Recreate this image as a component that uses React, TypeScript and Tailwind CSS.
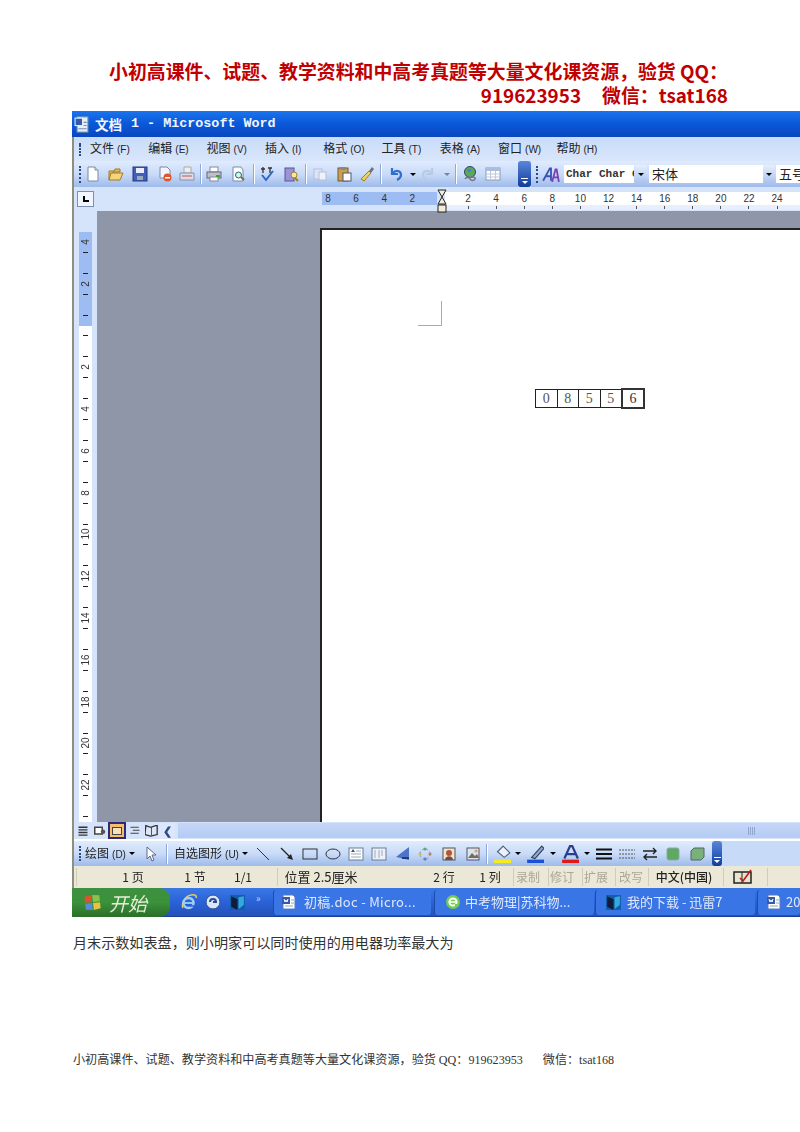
import React from "react";

const CJK = "font-['Noto_Sans_CJK_SC',sans-serif]";
const SERIF = "font-['Liberation_Serif','Noto_Sans_CJK_SC',serif]";
type IP = { children: React.ReactNode; s?: number };
const Ic = ({ children, s = 16 }: IP) => (
  <svg width={s} height={s} viewBox="0 0 16 16" className="block shrink-0">{children}</svg>
);

/* places each item so that its centre falls on the given x of the page */
type Slot = [number, number, React.ReactNode];
function Slots({ start, items }: { start: number; items: Slot[] }) {
  let prev = start;
  return (
    <>
      {items.map(([c, w, n], i) => {
        const m = c - w / 2 - prev;
        prev = c + w / 2;
        return (
          <div key={i} className="shrink-0 flex items-center justify-center whitespace-nowrap" style={{ marginLeft: m, width: w }}>{n}</div>
        );
      })}
    </>
  );
}

const NewDoc = () => <Ic><path d="M3 1h7l3 3v11H3z" fill="#fff" stroke="#7a8aa8" /><path d="M10 1v3h3" fill="#dfe6f4" stroke="#7a8aa8" /></Ic>;
const Open = () => <Ic><path d="M1 5h5l1-2h5v3H5l-4 8z" fill="#e8b94a" stroke="#a37b20" /><path d="M3 7h12l-3 7H1z" fill="#f5d47a" stroke="#a37b20" /></Ic>;
const Save = () => <Ic><rect x="1" y="1" width="14" height="14" fill="#3f5fb8" stroke="#26397c" /><rect x="4" y="2" width="8" height="5" fill="#e8eefc" /><rect x="5" y="10" width="6" height="4" fill="#9ab" /></Ic>;
const Perm = () => <Ic><path d="M3 1h7l3 3v8H3z" fill="#f4f4ff" stroke="#7a8aa8" /><circle cx="10.500" cy="11.500" r="4" fill="#e2552c" /><rect x="8" y="11" width="5" height="1.500" fill="#fff" /></Ic>;
const Mail = () => <Ic><path d="M5 1h7v6H5z" fill="#eee" stroke="#aaa" /><path d="M1 7h14v7H1z" fill="#d9dde8" stroke="#8a8fa8" /><path d="M3 10h10" stroke="#c55" /></Ic>;
const Print = () => <Ic><rect x="4" y="1" width="8" height="5" fill="#fff" stroke="#889" /><rect x="1" y="6" width="14" height="6" fill="#b9c2cc" stroke="#667" /><rect x="4" y="11" width="8" height="4" fill="#fff" stroke="#889" /><rect x="10" y="9" width="4" height="2" fill="#3a3" /></Ic>;
const Preview = () => <Ic><path d="M3 1h8l2 3v11H3z" fill="#fff" stroke="#7a8aa8" /><circle cx="8.500" cy="9" r="3" fill="#bfe" stroke="#457" /><path d="M11 11l3 3" stroke="#863" strokeWidth="2" /></Ic>;
const Spell = () => <Ic><path d="M2 3h4M4 1v6M9 2h4M11 2v5" stroke="#333" strokeWidth="1.300" /><path d="M3 9l4 5 7-9" fill="none" stroke="#2b68c4" strokeWidth="2" /></Ic>;
const Research = () => <Ic><rect x="2" y="2" width="9" height="13" fill="#9c93d6" stroke="#5a5296" /><circle cx="11" cy="9" r="3" fill="#f4e7a0" stroke="#a08020" /><path d="M12 12l3 3" stroke="#a08020" strokeWidth="2" /></Ic>;
const Cut = () => <Ic><rect x="2" y="3" width="8" height="10" fill="#dbe4f4" stroke="#b4c0d8" /><rect x="7" y="6" width="7" height="8" fill="#eef2fa" stroke="#b4c0d8" /></Ic>;
const Paste = () => <Ic><rect x="2" y="2" width="10" height="13" fill="#c8a050" stroke="#7a5c20" /><rect x="4" y="1" width="6" height="3" fill="#888" /><rect x="7" y="7" width="8" height="8" fill="#fff" stroke="#557" /></Ic>;
const Brush = () => <Ic><path d="M10 5L2 13l3 2 7-8z" fill="#f1d15a" stroke="#9a8030" /><path d="M10 5l3-4 2 2-3 4z" fill="#6b7280" /></Ic>;
const Undo = () => <Ic><path d="M4 2v6h6M5 7c2-3 8-3 8 2 0 2-2 4-4 5" fill="none" stroke="#2f6fd0" strokeWidth="2.200" /></Ic>;
const Redo = () => <Ic><path d="M12 2v6H6M11 7C9 4 3 4 3 9c0 2 2 4 4 5" fill="none" stroke="#b7cbe6" strokeWidth="2.200" /></Ic>;
const Globe = () => <Ic><circle cx="8" cy="6" r="5.500" fill="#5aa95a" stroke="#346" /><path d="M5 3h4v3H6z" fill="#4a7fd0" /><path d="M3 13c1-2 4-2 5 0s4 2 5 0-4-3-5-1" fill="none" stroke="#778" strokeWidth="1.600" /></Ic>;
const Table = () => <Ic><rect x="1" y="2" width="14" height="12" fill="#fff" stroke="#8a9ab8" /><rect x="1" y="2" width="14" height="3" fill="#a9bedf" /><path d="M1 8h14M1 11h14M5.500 5v9M10.500 5v9" stroke="#c0c8d8" /></Ic>;
const StyleIc = () => <Ic s={18}><path d="M1 14L7 3h1v11M4 10h4" fill="none" stroke="#3a4fb0" strokeWidth="1.600" /><path d="M9 15L12 4h1l2 11M10 11h4" fill="none" stroke="#7a3fb0" strokeWidth="1.600" /></Ic>;
const Caret = () => <span className="block w-0 h-0 border-x-[3px] border-x-transparent border-t-[3px] border-t-black" />;
const Chevron = ({ w, h }: { w: string; h: string }) => (
  <div className={`${w} ${h} shrink-0 bg-gradient-to-b from-[#5a86dc] to-[#0f3c9c] rounded-[3px] flex flex-col items-center justify-end gap-[2px] pb-[3px]`}>
    <span className="block w-[7px] h-[1px] bg-white" />
    <span className="block w-0 h-0 border-x-[3px] border-x-transparent border-t-[3px] border-t-white" />
  </div>
);
const Sep = () => <span className="block w-[2px] h-[20px] bg-[#8fa9d6] border-r border-white shrink-0" />;
const Grip = ({ h = "h-[17px]" }: { h?: string }) => (
  <div className={`flex flex-col justify-between ${h} w-[2px] shrink-0`}>
    {[0, 1, 2, 3, 4].map((i) => <span key={i} className="block w-[2px] h-[2px] bg-[#30487e]" />)}
  </div>
);
const Sm = ({ children }: { children: React.ReactNode }) => (
  <span className="text-[10px] font-['Liberation_Sans',sans-serif] ml-[3px]">{children}</span>
);

const toolbarBg = "bg-gradient-to-b from-[#e0ebfd] via-[#c9dbf8] to-[#9ebbea]";

const menus = [["文件", "(F)"], ["编辑", "(E)"], ["视图", "(V)"], ["插入", "(I)"], ["格式", "(O)"], ["工具", "(T)"], ["表格", "(A)"], ["窗口", "(W)"], ["帮助", "(H)"]];

function MenuBar() {
  return (
    <div className={`h-[24px] pl-[5px] flex items-center bg-gradient-to-b from-[#c9dcf9] to-[#d9e6fb] ${CJK}`}>
      <Grip h="h-[13px]" />
      <div className="flex pl-[9px]">
        {menus.map(([a, b]) => (
          <div key={a} className="w-[58.3px] shrink-0 text-[12px] leading-[16px] text-[#222] whitespace-nowrap">
            {a}<Sm>{b}</Sm>
          </div>
        ))}
      </div>
    </div>
  );
}

function MainToolbar() {
  const items: Slot[] = [
    [93, 16, <NewDoc />], [116, 16, <Open />], [140, 16, <Save />], [165, 16, <Perm />], [187, 16, <Mail />], [201, 2, <Sep />],
    [214, 16, <Print />], [238, 16, <Preview />], [254, 2, <Sep />], [267, 16, <Spell />], [291, 16, <Research />], [306, 2, <Sep />],
    [320, 16, <Cut />], [344, 16, <Paste />], [367, 16, <Brush />], [381, 2, <Sep />], [396, 16, <Undo />], [413, 6, <Caret />],
    [428, 16, <Redo />], [447, 6, <span className="opacity-40"><Caret /></span>], [456, 2, <Sep />], [470, 16, <Globe />], [493, 16, <Table />],
  ];
  return (
    <div className="h-[26px] flex items-center bg-[#c7daf8]">
      <div className={`h-[26px] w-[457px] shrink-0 pl-[5px] flex items-center rounded-r-[3px] ${toolbarBg}`}>
        <Grip />
        <Slots start={81} items={items} />
      </div>
      <div className="ml-[-13px]"><Chevron w="w-[13px]" h="h-[26px]" /></div>
      <div className={`h-[26px] flex-1 pl-[5px] flex items-center ${toolbarBg}`}>
        <Grip />
        <div className="ml-[4px]"><StyleIc /></div>
        <div className="ml-[4px] h-[18px] w-[70px] shrink-0 bg-white flex items-center pl-[2px] font-['Liberation_Mono',monospace] text-[11px] font-bold text-[#333] overflow-hidden whitespace-nowrap">Char Char C</div>
        <div className="ml-[1px]"><DropBtn /></div>
        <div className={`ml-[2px] h-[18px] w-[114px] shrink-0 bg-white flex items-center pl-[3px] text-[13px] text-[#222] ${CJK}`}>宋体</div>
        <DropBtn />
        <div className={`ml-[1px] h-[18px] w-[60px] shrink-0 bg-white flex items-center pl-[3px] text-[13px] text-[#222] whitespace-nowrap ${CJK}`}>五号</div>
      </div>
    </div>
  );
}
const DropBtn = () => <div className="h-[18px] w-[12px] shrink-0 bg-gradient-to-b from-[#e6effd] to-[#a9c3ee] flex items-center justify-center"><Caret /></div>;

function HRuler() {
  const left = ["8", "6", "4", "2"];
  const right = ["2", "4", "6", "8", "10", "12", "14", "16", "18", "20", "22", "24"];
  return (
    <div className="h-[24px] flex bg-[#d6e4fb] pl-[3px]">
      <div className="mt-[4px] h-[16px] w-[17px] shrink-0 bg-[#f1f5fd] border border-[#7d8fb0] flex items-center justify-center">
        <span className="block w-[6px] h-[6px] border-l-2 border-b-2 border-black" />
      </div>
      <div className="ml-[228px] mt-[5px] h-[13px] w-[115px] shrink-0 bg-[#9dbcf2] overflow-hidden">
        <div className="-ml-[8px] flex font-['Liberation_Sans',sans-serif] text-[10px] text-[#333] leading-[13px] whitespace-nowrap">
          {left.map((t) => <span key={t} className="block w-[28.1px] text-center shrink-0">{t}</span>)}
        </div>
      </div>
      <svg width="10" height="24" viewBox="0 -2 10 24" className="block shrink-0 mr-[-2px] overflow-visible relative z-10">
        <path d="M1 1h8L5 8l4 7H1l4-7z" fill="#f2ecd8" stroke="#222" /><rect x="1" y="16" width="8" height="7" fill="#f2ecd8" stroke="#222" />
      </svg>
      <div className="mt-[5px] h-[13px] flex-1 bg-white relative">
        <div className="flex pl-[9px] font-['Liberation_Sans',sans-serif] text-[10px] text-[#333] leading-[13px] whitespace-nowrap">
          {right.map((t) => <span key={t} className="block w-[28.1px] text-center shrink-0">{t}</span>)}
        </div>
        <div className="absolute left-0 right-0 top-full h-[5px] bg-[#e8effc] flex pl-[9px]">
          {right.map((t) => <span key={t} className="w-[28.1px] shrink-0 flex justify-center"><span className="block w-[1px] h-[3px] mt-[1px] bg-[#555]" /></span>)}
        </div>
      </div>
    </div>
  );
}

function VRuler() {
  const labels = ["4", "2", "", "2", "4", "6", "8", "10", "12", "14", "16", "18", "20", "22", ""];
  return (
    <div className="w-[23px] shrink-0 bg-[#d6e4fb] pl-[5px] pt-[21px] self-stretch">
      <div className="w-[13px] h-[590px] overflow-hidden bg-[linear-gradient(#9dbcf2_94px,#fff_94px)]">
        <div className="-mt-[11px] flex flex-col items-center">
          {labels.map((t, i) => (
            <div key={i} className="h-[41.8px] w-full shrink-0 flex flex-col items-center justify-between py-[10px]">
              <span className="block w-[5px] h-[1px] bg-[#222]" />
              <span className="block h-0 text-[10px] leading-[0] -rotate-90 font-['Liberation_Sans',sans-serif] text-[#333]">{t}</span>
              <span className="block w-[5px] h-[1px] bg-[#222]" />
            </div>
          ))}
        </div>
      </div>
    </div>
  );
}

function DocArea() {
  return (
    <div className="h-[611px] flex overflow-hidden">
      <VRuler />
      <div className="flex-1 bg-[#8e96a8] pt-[17px] pl-[223px] overflow-hidden">
        <div className="h-[700px] w-[600px] bg-white border-t-2 border-l-2 border-[#222] pl-[96px] pt-[71px]">
          <div className="w-[24px] h-[25px] border-r border-b border-[#aaa]" />
          <div className="ml-[117px] mt-[63px] flex w-fit font-['Liberation_Serif',serif] text-[14px] leading-[18px] text-[#555]">
            {["0", "8", "5", "5"].map((d, i) => (
              <span key={i} className="block w-[21.500px] h-[19px] text-center border border-r-0 border-[#222]">{d}</span>
            ))}
            <span className="block w-[24px] h-[21px] text-center border-2 border-[#333] -mt-[1px] text-[#333]">6</span>
          </div>
        </div>
      </div>
    </div>
  );
}

function ViewBar() {
  return (
    <div className="h-[17px] pl-[1px] flex items-center bg-[#d6e4fb]">
      <div className="flex items-center">
        <div className="w-[16px] flex justify-center"><Ic s={12}><path d="M2 3h12M2 6.500h12M2 10h12M2 13.500h12" stroke="#333" strokeWidth="1.800" /></Ic></div>
        <div className="w-[17px] flex justify-center"><Ic s={12}><rect x="1" y="3" width="10" height="9" fill="#fff" stroke="#444" strokeWidth="2" /><circle cx="12" cy="9" r="3" fill="#555" /></Ic></div>
        <div className="w-[18px] h-[17px] border-2 border-[#2a2a7e] bg-[#f6bd6e] flex items-center justify-center"><span className="block w-[10px] h-[8px] border border-[#444] bg-[#fbe2b6]" /></div>
        <div className="w-[17px] flex justify-center"><Ic s={12}><path d="M2 3h11M5 7h9M2 11h11" stroke="#444" strokeWidth="1.600" /></Ic></div>
        <div className="w-[16px] flex justify-center"><Ic s={13}><path d="M1 2l6 2 6-2 2 0v11l-8 2-7-2z" fill="#dde6f6" stroke="#333" strokeWidth="1.600" /><path d="M8 4v10" stroke="#333" /></Ic></div>
      </div>
      <div className="h-[16px] w-[16px] bg-[#dde7fb] flex items-center justify-center text-[#2c4a86] font-bold text-[11px] leading-none rounded-[2px]">❮</div>
      <div className="ml-[3px] flex-1 h-[15px] bg-gradient-to-b from-[#c5d6f7] to-[#b5cbf4] flex items-center justify-end pr-[44px]">
        <span className="block w-[8px] h-[8px] bg-[repeating-linear-gradient(90deg,#8fa6d2_0,#8fa6d2_1px,transparent_1px,transparent_2px)]" />
      </div>
    </div>
  );
}

const Shape = ({ children }: { children: React.ReactNode }) => <Ic>{children}</Ic>;
const ColorIc = ({ c, kind }: { c: string; kind: string }) => (
  <Ic s={18}>
    {kind === "fill" && <path d="M9 1l6 6-5 4-6-5z" fill="#eef" stroke="#467" />}
    {kind === "pen" && <path d="M14 1l2 2-8 9-3-1z" fill="#8fa8d8" stroke="#345" />}
    {kind === "a" && <path d="M3 12L8 1h2l5 11M5 8h8" fill="none" stroke="#2a3f8c" strokeWidth="2" />}
    <rect x="1" y="13" width="16" height="5" fill={c} />
  </Ic>
);

function DrawBar() {
  const items: Slot[] = [
    [110, 50, <span className="flex items-center gap-[3px]"><span>绘图<Sm>(D)</Sm></span><Caret /></span>],
    [151, 16, <Shape><path d="M4 1v12l3-3 2 5 2-1-2-5h4z" fill="#fff" stroke="#5a6a8a" /></Shape>],
    [167, 2, <Sep />],
    [211, 72, <span className="flex items-center gap-[3px]"><span>自选图形<Sm>(U)</Sm></span><Caret /></span>],
    [263, 16, <Shape><path d="M2 2l12 12" stroke="#333" /></Shape>],
    [287, 16, <Shape><path d="M2 2l10 10" stroke="#222" strokeWidth="1.200" /><path d="M14 14l-6-2 4-4z" fill="#222" /></Shape>],
    [310, 16, <Shape><rect x="1" y="3" width="14" height="10" fill="none" stroke="#333" /></Shape>],
    [333, 16, <Shape><ellipse cx="8" cy="8" rx="7" ry="5" fill="none" stroke="#333" /></Shape>],
    [356, 16, <Shape><rect x="1" y="2" width="14" height="12" fill="#fff" stroke="#6a7a9a" /><path d="M3 6l2-3 2 3z" fill="#456" /><path d="M8 5h5M3 8h10M3 11h10" stroke="#9ab" /></Shape>],
    [379, 16, <Shape><rect x="1" y="2" width="14" height="12" fill="#eef2f8" stroke="#6a7a9a" /><path d="M4 4v8M8 4v8M11 4v6" stroke="#9ab" /></Shape>],
    [403, 16, <Shape><path d="M1 11L14 1v13z" fill="#4c74c8" /><path d="M7 12h7" stroke="#223a7c" strokeWidth="2" /></Shape>],
    [425, 16, <Shape><circle cx="8" cy="3" r="1.600" fill="#5a8" /><circle cx="13" cy="8" r="1.600" fill="#d75" /><circle cx="8" cy="13" r="1.600" fill="#57c" /><circle cx="3" cy="8" r="1.600" fill="#db5" /><circle cx="8" cy="8" r="5" fill="none" stroke="#89a" strokeDasharray="2 2" /></Shape>],
    [449, 16, <Shape><rect x="2" y="2" width="12" height="12" fill="#efe4d0" stroke="#555" /><circle cx="8" cy="7" r="3" fill="#b5543c" /><path d="M4 14c0-5 8-5 8 0" fill="#7a4a3a" /></Shape>],
    [473, 16, <Shape><rect x="2" y="2" width="12" height="12" fill="#d8e4f0" stroke="#556" /><path d="M3 12l4-5 3 3 2-2 2 4z" fill="#7a6a5a" /><circle cx="11" cy="5" r="1.600" fill="#e8a050" /></Shape>],
    [487, 2, <Sep />],
    [502, 18, <ColorIc c="#f6ea20" kind="fill" />],
    [518, 6, <Caret />],
    [535, 18, <ColorIc c="#1a50d8" kind="pen" />],
    [553, 6, <Caret />],
    [570, 18, <ColorIc c="#e01818" kind="a" />],
    [587, 6, <Caret />],
    [604, 16, <Shape><path d="M0 3.500h16M0 8h16M0 12.500h16" stroke="#111" strokeWidth="2" /></Shape>],
    [627, 16, <Shape><path d="M0 4h16M0 8h16M0 12h16" stroke="#555" strokeDasharray="2 1" /></Shape>],
    [650, 16, <Shape><path d="M1 5h13M11 2l3 3-3 3M15 11H2M5 8l-3 3 3 3" fill="none" stroke="#222" strokeWidth="1.400" /></Shape>],
    [673, 16, <Shape><rect x="2" y="2" width="12" height="12" rx="2" fill="#5fa85f" stroke="#8aa" /></Shape>],
    [697, 16, <Shape><path d="M2 5l3-3h10v9l-3 3H2z" fill="#7ab07a" stroke="#566" /></Shape>],
  ];
  return (
    <div className="mt-[2px] h-[25px] flex bg-[#c7daf8]">
      <div className={`h-[25px] w-[648px] shrink-0 pl-[5px] flex items-center rounded-r-[3px] ${toolbarBg} ${CJK} text-[12px] text-[#222] leading-none`}>
        <Grip h="h-[15px]" />
        <Slots start={81} items={items} />
      </div>
      <div className="-ml-[10px]"><Chevron w="w-[10px]" h="h-[25px]" /></div>
    </div>
  );
}

function StatusBar() {
  const Bar = () => <span className="block w-[1px] h-[18px] bg-[#cfccb8]" />;
  const G = ({ children }: { children: React.ReactNode }) => <span className="text-[#aaa79a]">{children}</span>;
  const items: Slot[] = [
    [76, 1, <Bar />],
    [133, 28, <span>1 页</span>], [195, 28, <span>1 节</span>], [243, 24, <span>1/1</span>], [277, 1, <Bar />],
    [321, 76, <span className="text-[13px]">位置 2.5厘米</span>],
    [444, 28, <span>2 行</span>], [490, 28, <span>1 列</span>], [513, 1, <Bar />],
    [528, 26, <G>录制</G>], [548, 1, <Bar />], [562, 26, <G>修订</G>], [582, 1, <Bar />],
    [596, 26, <G>扩展</G>], [615, 1, <Bar />], [631, 26, <G>改写</G>], [648, 1, <Bar />],
    [684, 64, <span className="font-medium">中文(中国)</span>], [723, 1, <Bar />],
    [743, 20, (
      <svg width="20" height="16" viewBox="0 0 20 16" className="block shrink-0">
        <rect x="1" y="3" width="17" height="11" fill="#e8e4d0" stroke="#222" strokeWidth="1.500" />
        <path d="M9 3v11" stroke="#222" /><path d="M7 9l3 3 8-11" fill="none" stroke="#c01818" strokeWidth="1.600" />
      </svg>
    )],
    [767, 1, <Bar />],
  ];
  return (
    <div className={`h-[22px] bg-[#ebe8d8] flex items-center text-[12px] text-[#222] ${CJK}`}>
      <Slots start={74} items={items} />
    </div>
  );
}

function Start() {
  return (
    <div className="h-[29px] w-[98px] shrink-0 pl-[11px] flex items-center gap-[7px] rounded-r-[10px] bg-gradient-to-b from-[#3f8f3f] via-[#3a923a] to-[#2a6e2a]">
      <svg width="19" height="19" viewBox="0 0 19 19" className="block shrink-0 -rotate-6">
        <path d="M2 3l7-1v7H2z" fill="#d8562c" /><path d="M10 2l7 1v6h-7z" fill="#8ac24c" /><path d="M2 10h7v7l-7-1z" fill="#5a8ad8" /><path d="M10 10h7v6l-7 1z" fill="#eac23a" />
      </svg>
      <span className={`italic text-[19px] leading-none text-[#e6ecd8] ${CJK}`}>开始</span>
    </div>
  );
}

const WordIc = () => (
  <svg width="16" height="16" viewBox="0 0 16 16" className="block shrink-0">
    <path d="M2 1h10l2 2v12H2z" fill="#fff" stroke="#5a78c0" /><rect x="1" y="3" width="8" height="7" fill="#3a5aa8" /><path d="M3 5l1 3 1-2 1 2 1-3" fill="none" stroke="#fff" />
    <path d="M10 6h3M10 9h3M4 12h8" stroke="#8ab" />
  </svg>
);
const IeIc = () => (
  <svg width="16" height="16" viewBox="0 0 16 16" className="block shrink-0">
    <circle cx="8" cy="8" r="7" fill="#6fce50" /><circle cx="8" cy="8" r="3.600" fill="none" stroke="#fff" strokeWidth="2" /><path d="M4 8h8" stroke="#fff" strokeWidth="1.600" /><path d="M10 11l3 0" stroke="#6fce50" strokeWidth="2" />
  </svg>
);
const QuickIe = () => (
  <svg width="17" height="18" viewBox="0 0 17 18" className="block shrink-0">
    <path d="M3 15C1 11 5 3 11 2c4-1 6 1 5 3" fill="none" stroke="#e8c85a" strokeWidth="1.500" />
    <circle cx="8.500" cy="10" r="5" fill="none" stroke="#9fd0f7" strokeWidth="2.500" /><path d="M4 10h9" stroke="#9fd0f7" strokeWidth="1.800" />
    <path d="M10 13l4 0" stroke="#2a62d8" strokeWidth="1.500" />
  </svg>
);
const ThunderIc = () => (
  <svg width="17" height="17" viewBox="0 0 16 16" className="block shrink-0">
    <rect x="1" y="1" width="14" height="14" fill="#0e5fa8" /><path d="M2 2l6 3v10l-6-3z" fill="#111c3c" /><path d="M9 3l5-1v8l-5 4z" fill="#36a8e0" />
  </svg>
);

function TaskBtn({ cls, icon, children }: { cls: string; icon: React.ReactNode; children: React.ReactNode }) {
  return (
    <div className={`${cls} shrink-0 h-[25px] flex items-center rounded-[3px] bg-[#3a75e6] border-l border-[#1f4ba8] overflow-hidden whitespace-nowrap text-[#dfe9fb] text-[13px] ${CJK}`}>
      {icon}{children}
    </div>
  );
}

function Taskbar() {
  return (
    <div className="h-[29px] flex items-center bg-gradient-to-b from-[#3a78e4] via-[#2a62d8] to-[#2352b8] border-b border-[#1d3e96]">
      <Start />
      <div className="w-[101px] shrink-0 flex items-center pl-[10px] gap-[8px]">
        <QuickIe />
        <svg width="16" height="16" viewBox="0 0 16 16" className="block shrink-0"><circle cx="8" cy="8" r="7" fill="#d8e6f8" stroke="#2a4a90" /><path d="M5 8a3 3 0 1 1 6 0H8" fill="none" stroke="#2a4a90" strokeWidth="2" /></svg>
        <ThunderIc />
        <span className="text-[#c6d6f5] text-[10px] leading-none -mt-[8px] ml-[2px]">»</span>
      </div>
      <TaskBtn cls="ml-[2px] w-[158px] pl-[7px] gap-[7px]" icon={<WordIc />}><span className="tracking-[0.3px]">初稿.doc - Micro...</span></TaskBtn>
      <TaskBtn cls="ml-[3px] w-[160px] pl-[10px] gap-[4px]" icon={<IeIc />}><span>中考物理|苏科物...</span></TaskBtn>
      <TaskBtn cls="ml-[1px] w-[160px] pl-[9px] gap-[5px]" icon={<ThunderIc />}><span>我的下载 - 迅雷7</span></TaskBtn>
      <TaskBtn cls="ml-[2px] w-[43px] pl-[8px] gap-[4px]" icon={<WordIc />}><span>20.</span></TaskBtn>
    </div>
  );
}

function WordWindow() {
  return (
    <div className="ml-[72px] mt-[4px] h-[806px] overflow-hidden blur-[0.4px]">
      <div className="w-[728px] border-l-2 border-[#8f8f80]">
        <div className="-ml-[2px] h-[26px] pl-[2px] flex items-center bg-gradient-to-b from-[#1a74ec] via-[#0a58d8] to-[#0a46c0]">
          <svg width="17" height="17" viewBox="0 0 16 16" className="block shrink-0">
            <path d="M3 1h10v14H3z" fill="#e8eef8" stroke="#8aa" /><rect x="1" y="2" width="7" height="7" fill="#2f5ab0" stroke="#e8eef8" /><path d="M9 6h3M9 9h3M4 12h8" stroke="#7a8ab0" />
          </svg>
          <span className={`ml-[4px] text-[13.500px] font-bold text-[#f2f6ff] ${CJK}`}>文档</span>
          <span className="ml-[9px] text-[13.400px] font-bold text-[#f2f6ff] font-['Liberation_Mono',monospace] whitespace-pre">1 - Microsoft Word</span>
        </div>
        <MenuBar />
        <MainToolbar />
        <HRuler />
        <DocArea />
        <ViewBar />
        <DrawBar />
        <StatusBar />
        <div className="-ml-[2px]"><Taskbar /></div>
      </div>
    </div>
  );
}

export default function App() {
  return (
    <div className={`relative w-[800px] h-[1132px] overflow-hidden bg-white ${CJK}`}>
      <div className="pt-[59px] pl-[72px] w-[728px] text-right text-[18.900px] leading-[24px] font-bold text-[#c00000]">
        <p className="whitespace-nowrap">小初高课件、试题、教学资料和中高考真题等大量文化课资源，验货 QQ：</p>
        <p className="whitespace-nowrap">919623953<span className="ml-[21px]">微信：tsat168</span></p>
      </div>
      <WordWindow />
      <p className={`ml-[73px] mt-[16px] text-[14.100px] leading-[20px] text-[#333] whitespace-nowrap ${SERIF}`}>月末示数如表盘，则小明家可以同时使用的用电器功率最大为</p>
      <p className={`ml-[73px] mt-[99px] text-[12.100px] leading-[16px] text-[#333] whitespace-nowrap ${SERIF}`}>小初高课件、试题、教学资料和中高考真题等大量文化课资源，验货 QQ：919623953<span className="ml-[20px]">微信：tsat168</span></p>
    </div>
  );
}
